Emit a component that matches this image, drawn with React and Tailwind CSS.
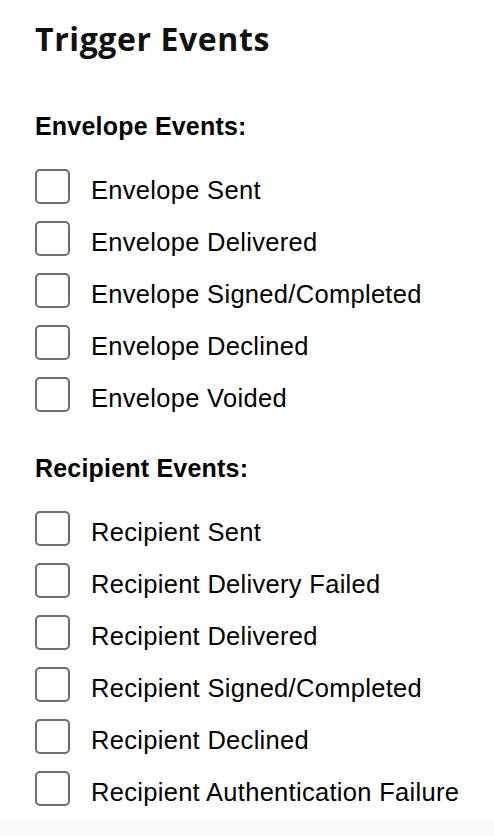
const envelopeEvents = [
  'Envelope Sent',
  'Envelope Delivered',
  'Envelope Signed/Completed',
  'Envelope Declined',
  'Envelope Voided',
];

const recipientEvents = [
  'Recipient Sent',
  'Recipient Delivery Failed',
  'Recipient Delivered',
  'Recipient Signed/Completed',
  'Recipient Declined',
  'Recipient Authentication Failure',
];

function EventCheckbox({ label }) {
  return (
    <label className="flex items-end gap-[21px] h-[35px] cursor-pointer">
      <input type="checkbox" className="peer sr-only" />
      <span className="w-[35px] h-[35px] shrink-0 rounded-[5px] border-2 border-[#6e6e6e] bg-white" />
      <span className="text-[25.5px] leading-[28px] tracking-[0.3px] text-black whitespace-nowrap">
        {label}
      </span>
    </label>
  );
}

function EventGroup({ title, events }) {
  return (
    <section>
      <h3 className="text-[25px] leading-[28px] font-bold tracking-[0.2px] text-black">{title}</h3>
      <div className="mt-[29px] flex flex-col gap-[17px]">
        {events.map((item) => (
          <EventCheckbox key={item} label={item} />
        ))}
      </div>
    </section>
  );
}

export default function App() {
  return (
    <div className="min-h-screen bg-[#fafafa] font-['Liberation_Sans',Arial,sans-serif]">
      <div className="bg-white pl-[35px] pt-[19px] pb-[14px]">
        {/* HEADER */}
        <h2 className="font-['Open_Sans',sans-serif] font-bold text-[32px] leading-[40px] tracking-[0.6px] text-[#111]">
          Trigger Events
        </h2>

        <div className="mt-[53px] flex flex-col gap-[42px]">
          <EventGroup title="Envelope Events:" events={envelopeEvents} />
          <EventGroup title="Recipient Events:" events={recipientEvents} />
        </div>
      </div>
    </div>
  );
}
